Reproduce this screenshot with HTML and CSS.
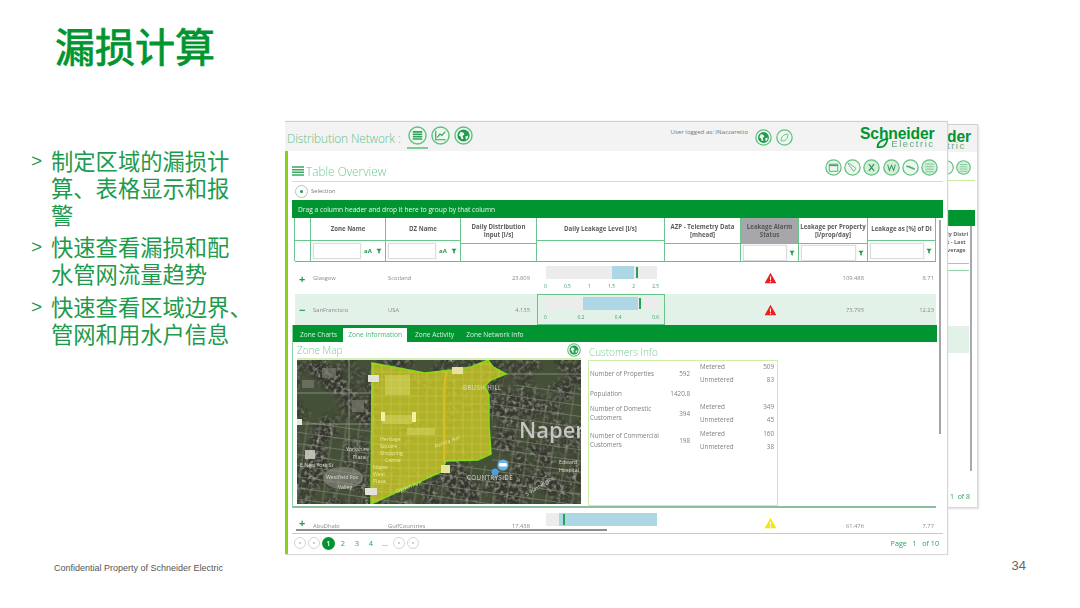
FILE: index.html
```html
<!DOCTYPE html>
<html lang="zh-CN">
<head>
<meta charset="utf-8">
<title>漏损计算</title>
<link rel="stylesheet" href="styles.css">
</head>
<body>
<svg class="defs" width="0" height="0" aria-hidden="true">
  <defs>
    <symbol id="i-ring" viewBox="0 0 20 20"><circle cx="10" cy="10" r="9" fill="#eef8f0" stroke="#62c07f" stroke-width="1.5"/></symbol>
    <symbol id="i-list" viewBox="0 0 20 20"><use href="#i-ring"/><path d="M5 6.2h10M5 8.7h10M5 11.2h10M5 13.7h10" stroke="#2ea65a" stroke-width="1.7"/></symbol>
    <symbol id="i-chart" viewBox="0 0 20 20"><use href="#i-ring"/><path d="M5 5v9.5h10.5" fill="none" stroke="#2ea65a" stroke-width="1.2"/><path d="M6.5 12l3-3.5 2 1.5 3.5-4" fill="none" stroke="#2ea65a" stroke-width="1.2"/></symbol>
    <symbol id="i-globe" viewBox="0 0 20 20"><use href="#i-ring"/><circle cx="10" cy="10" r="6.4" fill="#1f9c4d"/><path d="M7 6l3 1 1 2-2 1.500 1 3-2 .5-1-3-2-1zM12 11l3-1-.5 3-2 1.500z" fill="#eef8f0"/></symbol>
    <symbol id="i-leaf" viewBox="0 0 20 20"><use href="#i-ring"/><path d="M6 14c0-5 3-8 8-8 0 5-2 8-6 8z" fill="none" stroke="#62c07f" stroke-width="1.100"/></symbol>
    <symbol id="i-win" viewBox="0 0 20 20"><use href="#i-ring"/><path d="M5 6h10v8.500H5z" fill="none" stroke="#3aa863" stroke-width="1"/><path d="M5 7.500h10" stroke="#3aa863" stroke-width="1.800"/></symbol>
    <symbol id="i-tag" viewBox="0 0 20 20"><use href="#i-ring"/><path d="M5 5l2.500 1 6.500 5-2.500 3.500L6.500 8z" fill="none" stroke="#4bb36f" stroke-width="1"/></symbol>
    <symbol id="i-x" viewBox="0 0 20 20"><circle cx="10" cy="10" r="9" fill="#d7eedd" stroke="#62c07f" stroke-width="1.500"/><path d="M7 6l6 8M13 6l-6 8" stroke="#3b9a5b" stroke-width="1.600"/></symbol>
    <symbol id="i-w" viewBox="0 0 20 20"><circle cx="10" cy="10" r="9" fill="#d7eedd" stroke="#62c07f" stroke-width="1.500"/><path d="M5.500 6.500l2 7 2.500-6 2.500 6 2-7" fill="none" stroke="#3b9a5b" stroke-width="1.200"/></symbol>
    <symbol id="i-link" viewBox="0 0 20 20"><use href="#i-ring"/><path d="M5 8.500l3 .5 7 3" fill="none" stroke="#4bb36f" stroke-width="2"/></symbol>
    <symbol id="i-rows" viewBox="0 0 20 20"><circle cx="10" cy="10" r="9" fill="#d7eedd" stroke="#62c07f" stroke-width="1.500"/><path d="M5 6h10M5 9h10M5 12h10M5 15h10" stroke="#62c07f" stroke-width=".9"/></symbol>
    <symbol id="i-warn" viewBox="0 0 20 18"><path d="M10 1l9 16H1z"/><path d="M9 6.500h2l-.4 6h-1.200zM9 13.500h2v2H9z" fill="#fff"/></symbol>
    <symbol id="i-funnel" viewBox="0 0 8 8"><path d="M.5 1h7L5 4v3.500L3 6.500V4z" fill="#1f9c4d"/></symbol>
    <filter id="aerial" x="0" y="0" width="100%" height="100%">
      <feTurbulence type="fractalNoise" baseFrequency=".25" numOctaves="3" seed="7"/>
      <feColorMatrix values="0 0 0 0 .55  0 0 0 0 .55  0 0 0 0 .48  1.800 0 0 0 -.8"/>
    </filter>
    <filter id="soft" x="0" y="0" width="100%" height="100%">
      <feTurbulence type="fractalNoise" baseFrequency=".035" numOctaves="2" seed="3"/>
      <feColorMatrix values="0 0 0 0 .06  0 0 0 0 .08  0 0 0 0 .04  3.500 0 0 0 -1.300"/>
    </filter>
    <pattern id="streets" width="13" height="11" patternUnits="userSpaceOnUse" patternTransform="rotate(8)">
      <path d="M0 5.500h13M6 0v11" stroke="#a9a99c" stroke-width=".7" opacity=".6"/>
    </pattern>
    <pattern id="streets2" width="9" height="8" patternUnits="userSpaceOnUse">
      <path d="M0 4h9M4 0v8" stroke="#e9e98a" stroke-width=".6" opacity=".4"/>
    </pattern>
  </defs>
</svg>

<main class="slide">
  <h1 class="title">漏损计算</h1>

  <div class="content">
    <ul class="points">
      <li><span class="arrow">&gt;</span><span>制定区域的漏损计<br>算、表格显示和报<br>警</span></li>
      <li><span class="arrow">&gt;</span><span>快速查看漏损和配<br>水管网流量趋势</span></li>
      <li><span class="arrow">&gt;</span><span>快速查看区域边界、<br>管网和用水户信息</span></li>
    </ul>

    <div class="shot">
      <div class="back">
        <div class="back-head">
          <span class="back-logo">der</span>
          <span class="back-logo-sub">tric</span>
        </div>
        <div class="back-icons"><svg class="ico-14"><use href="#i-ring"/></svg><svg class="ico-14"><use href="#i-rows"/></svg></div>
        <div class="back-rule"></div>
        <div class="back-band"></div>
        <div class="back-body">
          <div class="back-col">
            <p class="back-text">ly Distri<br>t - Last<br>verage</p>
            <div class="back-line"></div>
            <div class="back-line"></div>
            <div class="back-pale"></div>
          </div>
          <div class="back-scroll"></div>
        </div>
        <div class="back-foot">1&nbsp;&nbsp;of 8</div>
      </div>

      <div class="app">
        <header class="app-head">
          <span class="app-name">Distribution Network :</span>
          <span class="nav-ico current"><svg class="ico-18"><use href="#i-list"/></svg></span>
          <svg class="ico-18"><use href="#i-chart"/></svg>
          <svg class="ico-18"><use href="#i-globe"/></svg>
          <span class="user">User logged as: INazzaretto</span>
          <svg class="ico-16"><use href="#i-globe"/></svg>
          <svg class="ico-16"><use href="#i-leaf"/></svg>
          <div class="logo">
            <span class="logo-main">Schneider</span>
            <span class="logo-sub"><svg class="logo-leaf" viewBox="0 0 14 12"><path d="M1 11c0-5 4-9 12-10-1 6-4 10-9 10z" fill="none" stroke="#009530" stroke-width="2"/></svg>Electric</span>
          </div>
        </header>

        <div class="app-body">
          <div class="overview">
            <svg class="ov-ico" viewBox="0 0 12 10"><path d="M0 1h12M0 3.700h12M0 6.300h12M0 9h12" stroke="#3aa863" stroke-width="1.500"/></svg>
            <span class="ov-title">Table Overview</span>
            <div class="tools">
              <svg class="ico-17"><use href="#i-win"/></svg>
              <svg class="ico-17"><use href="#i-tag"/></svg>
              <svg class="ico-17"><use href="#i-x"/></svg>
              <svg class="ico-17"><use href="#i-w"/></svg>
              <svg class="ico-17"><use href="#i-link"/></svg>
              <svg class="ico-17"><use href="#i-rows"/></svg>
            </div>
          </div>

          <div class="selection"><span class="sel-btn"></span><span>Selection</span></div>
          <div class="group-band">Drag a column header and drop it here to group by that column</div>

          <div class="tablewrap">
            <div class="tablecol">
              <div class="row thead">
                <div class="th short"><span class="th-label"></span><span class="th-filter"></span></div>
                <div class="th short"><span class="th-label">Zone Name</span><span class="th-filter"><span class="input"></span><span class="aa">aA</span><svg class="funnel"><use href="#i-funnel"/></svg></span></div>
                <div class="th short"><span class="th-label">DZ Name</span><span class="th-filter"><span class="input"></span><span class="aa">aA</span><svg class="funnel"><use href="#i-funnel"/></svg></span></div>
                <div class="th"><span class="th-label">Daily Distribution<br>Input [l/s]</span><span class="th-filter"></span></div>
                <div class="th short"><span class="th-label">Daily Leakage Level [l/s]</span><span class="th-filter"></span></div>
                <div class="th"><span class="th-label">AZP - Telemetry Data<br>[mhead]</span><span class="th-filter"></span></div>
                <div class="th sorted"><span class="th-label">Leakage Alarm<br>Status</span><span class="th-filter"><span class="input"></span><svg class="funnel"><use href="#i-funnel"/></svg></span></div>
                <div class="th"><span class="th-label">Leakage per Property<br>[l/prop/day]</span><span class="th-filter"><span class="input"></span><svg class="funnel"><use href="#i-funnel"/></svg></span></div>
                <div class="th short"><span class="th-label">Leakage as [%] of DI</span><span class="th-filter"><span class="input"></span><svg class="funnel"><use href="#i-funnel"/></svg></span></div>
              </div>

              <div class="row tr">
                <span class="td toggle">+</span><span class="td">Glasgow</span><span class="td">Scotland</span><span class="td num">23.809</span>
                <div class="td chart">
                  <div class="bar"><span class="fill" style="left:59.500%;width:19.800%"></span><span class="mark" style="left:81.500%"></span></div>
                  <div class="axis"><span>0</span><span>0.5</span><span>1</span><span>1.5</span><span>2</span><span>2.5</span></div>
                </div>
                <span class="td"></span>
                <span class="td center"><svg class="warn red"><use href="#i-warn"/></svg></span><span class="td num">109.488</span><span class="td num">8.71</span>
              </div>

              <div class="row tr selected">
                <span class="td toggle">−</span><span class="td">SanFrancisco</span><span class="td">USA</span><span class="td num">4.135</span>
                <div class="td chart boxed">
                  <div class="bar"><span class="fill" style="left:33.300%;width:49.500%"></span><span class="mark" style="left:83.500%"></span></div>
                  <div class="axis"><span>0</span><span>0.2</span><span>0.4</span><span>0.6</span></div>
                </div>
                <span class="td"></span>
                <span class="td center"><svg class="warn red"><use href="#i-warn"/></svg></span><span class="td num">73.795</span><span class="td num">12.23</span>
              </div>

              <section class="detail">
                <nav class="tabs">
                  <span class="tab">Zone Charts</span>
                  <span class="tab active">Zone Information</span>
                  <span class="tab">Zone Activity</span>
                  <span class="tab">Zone Network Info</span>
                </nav>
                <div class="panels">
                  <div class="map-panel">
                    <div class="panel-head"><span class="panel-title">Zone Map</span><svg class="ico-13"><use href="#i-globe"/></svg></div>
                    <div class="map-frame">
                      <svg class="map" viewBox="0 0 284 144" width="284" height="144" role="img" aria-label="Zone map">
                        <rect width="284" height="144" fill="#34362d"/>
                        <rect width="284" height="144" filter="url(#aerial)"/>
                        <rect width="284" height="144" filter="url(#soft)"/>
                        <rect x="195" y="25" width="89" height="119" fill="url(#streets)"/>
                        <rect y="60" width="75" height="84" fill="url(#streets)"/>
                        <rect x="76" y="105" width="120" height="39" fill="url(#streets)"/>
                        <ellipse cx="46" cy="118" rx="20" ry="11" fill="#8d8f86" opacity=".6"/>
                        <path d="M0 64h75M0 33h75M52 0v100M209 14h75" stroke="#b9b9ac" stroke-width=".8" opacity=".7"/>
                        <path d="M5 20h12v8H5zM25 8h14v10H25zM55 40h12v12H55z" fill="#77796d" opacity=".7"/>
                        <rect x="8" y="90" width="10" height="9" fill="#d7d7cf" opacity=".8"/>
                        <rect y="59" width="5" height="6" fill="#e8e8e0"/>
                        <path d="M75 3l53 10 26-3 20-3L191 0l5 7 13 7-15 6-6 6 4 9v30l2 29-13 6-32 1-5 11-70 32z" fill="#bfbf26" fill-opacity=".88" stroke="#7fdc12" stroke-width="1.500"/>
                        <path d="M75 3l53 10 26-3 20-3L191 0l5 7 13 7-15 6-6 6 4 9v30l2 29-13 6-32 1-5 11-70 32z" fill="url(#streets2)"/>
                        <path d="M150 12c-3 10-3 20-3 40v50" fill="none" stroke="#dcbc1e" stroke-width="2"/>
                        <path d="M88 15h25v20H88zM85 55h30v9H85zM110 68h28v7h-28z" fill="#dddd6e" opacity=".45"/>
                        <path d="M84 52h4v9h-4zM115 52h4v10h-4z" fill="#f2f2a0"/>
                        <rect x="155" y="7" width="11" height="7" fill="#e8e2a0"/>
                        <rect x="71" y="15" width="11" height="7" fill="#e2e2d8"/>
                        <rect x="144" y="105" width="9" height="8" fill="#e8e2a0"/>
                        <rect x="68" y="128" width="12" height="7" fill="#e2e2d8"/>
                        <text x="222" y="78" class="m-big">Naper</text>
                        <text x="166" y="30" class="m-s">BRUSH HILL</text>
                        <text x="170" y="120" class="m-s">COUNTRYSIDE</text>
                        <text x="49" y="91" class="m-t">Yorkshire</text>
                        <text x="56" y="99" class="m-t">Plaza</text>
                        <text x="3" y="107" class="m-t">E New York St</text>
                        <text x="29" y="119" class="m-t">Westfield Fox</text>
                        <text x="41" y="129" class="m-t">Valley</text>
                        <text x="83" y="81" class="m-y">Heritage</text>
                        <text x="83" y="88" class="m-y">Square</text>
                        <text x="83" y="95" class="m-y">Shopping</text>
                        <text x="88" y="102" class="m-y">Center</text>
                        <text x="76" y="109" class="m-y">Naper</text>
                        <text x="76" y="116" class="m-y">West</text>
                        <text x="76" y="123" class="m-y">Plaza</text>
                        <text x="100" y="133" class="m-y" transform="rotate(-20 100 133)">Ogden Ave</text>
                        <text x="138" y="88" class="m-y" transform="rotate(-20 138 88)">Aurora Ave</text>
                        <text x="230" y="136" class="m-t" transform="rotate(-32 230 136)">S Washington</text>
                        <text x="262" y="104" class="m-t">Edward</text>
                        <text x="262" y="112" class="m-t">Hospital</text>
                        <circle cx="206" cy="105" r="5.500" fill="#6cb2e8"/>
                        <rect x="202" y="103" width="8" height="3.500" rx="1.500" fill="#fff"/>
                        <circle cx="198" cy="112" r="3.500" fill="#4b9ee0"/>
                      </svg>
                    </div>
                  </div>

                  <div class="cust-panel">
                    <div class="panel-head"><span class="panel-title">Customers Info</span></div>
                    <div class="cust-box">
                      <div class="cust-group g-two">
                        <span class="c-name">Number of Properties</span><span class="c-val">592</span>
                        <div class="c-sub"><span>Metered</span><span>509</span><span>Unmetered</span><span>83</span></div>
                      </div>
                      <div class="cust-group g-one">
                        <span class="c-name">Population</span><span class="c-val">1420.8</span>
                      </div>
                      <div class="cust-group g-two">
                        <span class="c-name">Number of Domestic<br>Customers</span><span class="c-val">394</span>
                        <div class="c-sub"><span>Metered</span><span>349</span><span>Unmetered</span><span>45</span></div>
                      </div>
                      <div class="cust-group g-two">
                        <span class="c-name">Number of Commercial<br>Customers</span><span class="c-val">198</span>
                        <div class="c-sub"><span>Metered</span><span>160</span><span>Unmetered</span><span>38</span></div>
                      </div>
                    </div>
                  </div>
                </div>
              </section>

              <div class="row tr clipped">
                <span class="td toggle">+</span><span class="td">AbuDhabi</span><span class="td">GulfCountries</span><span class="td num">17.438</span>
                <div class="td chart">
                  <div class="bar"><span class="fill" style="left:11.500%;width:88.500%"></span><span class="mark" style="left:15%"></span></div>
                </div>
                <span class="td"></span>
                <span class="td center"><svg class="warn yellow"><use href="#i-warn"/></svg></span><span class="td num">61.476</span><span class="td num">7.77</span>
              </div>
              <div class="hscroll"><span class="hthumb"></span></div>
            </div>
            <div class="vscroll"><span class="vthumb"></span></div>
          </div>

          <footer class="pager">
            <span class="pg-ctl"></span><span class="pg-ctl"></span>
            <span class="pg-cur">1</span><span class="pg-num">2</span><span class="pg-num">3</span><span class="pg-num">4</span><span class="pg-num">...</span>
            <span class="pg-ctl"></span><span class="pg-ctl"></span>
            <span class="pg-info">Page&nbsp;&nbsp;&nbsp;1&nbsp;&nbsp;&nbsp;of 10</span>
          </footer>
        </div>
      </div>
    </div>
  </div>

  <footer class="slide-foot">
    <span class="confidential">Confidential Property of Schneider Electric</span>
    <span class="page-no">34</span>
  </footer>
</main>
</body>
</html>
```

FILE: styles.css
```css
* { box-sizing: border-box; }
html, body { margin: 0; padding: 0; background: #fff; }
.defs { position: absolute; }

.slide {
  width: 1080px;
  height: 608px;
  display: flex;
  flex-direction: column;
  overflow: hidden;
  background: #fff;
  font-family: "Noto Sans CJK SC", "Liberation Sans", sans-serif;
}

.title {
  height: 121px;
  margin: 0;
  padding: 16px 0 0 55px;
  color: #009530;
  font-size: 40px;
  line-height: 58px;
  font-weight: 400;
  -webkit-text-stroke: .8px #009530;
}

.content { display: flex; height: 434px; }

.points {
  width: 285px;
  margin: 0;
  padding: 25.500px 0 0 31px;
  list-style: none;
  color: #1d9a4c;
  font-size: 22.300px;
  line-height: 27.200px;
  white-space: nowrap;
}
.points li { display: flex; margin-bottom: 5px; }
.arrow { width: 20px; font-family: "Liberation Sans", sans-serif; font-size: 19px; }

/* screenshot */
.shot {
  position: relative;
  width: 693px;
  filter: blur(.45px);
  font-family: "Open Sans", "Liberation Sans", sans-serif;
}

.back {
  position: absolute;
  top: 3px;
  right: 0;
  width: 78px;
  height: 384px;
  padding-left: 47px;
  background: #fff;
  border-top: 1px solid #cfcfcf;
  border-right: 1px solid #d8d8d8;
  border-bottom: 1px solid #d8d8d8;
  box-shadow: 1px 1px 2px #ddd;
  overflow: hidden;
}
.back-head {
  height: 27px;
  margin-left: -47px;
  padding-left: 47px;
  background: #f3f3f3;
  color: #009530;
  line-height: 1;
  position: relative;
}
.back-logo { display: block; padding-top: 3px; font: 700 15.600px "Liberation Sans", sans-serif; letter-spacing: -.15px; }
.back-logo-sub { display: block; margin-top: -6px; font: 400 9.500px "Liberation Sans", sans-serif; letter-spacing: 1.500px; color: #63a77e; }
.back-icons { display: flex; justify-content: flex-end; height: 28px; padding: 8px 6px 0 0; gap: 2px; flex-wrap: nowrap; }
.back-rule { height: 1px; margin-right: 2px; background: #c8ec9f; }
.back-band { height: 16px; margin-top: 29px; margin-right: 2px; background: #009530; }
.back-body { display: flex; height: 245px; }
.back-col { width: 22px; overflow: hidden; }
.back-text { margin: 4px 0 0; height: 27px; font-size: 5.500px; line-height: 8px; font-weight: 700; color: #666; white-space: nowrap; }
.back-line { height: 1px; margin-top: 6px; background: #8fd2a5; }
.back-pale { height: 27px; margin-top: 55px; background: #e3f2e8; }
.back-scroll { width: 2px; height: 100%; margin-left: 1px; background: #a8a8ad; }
.back-foot { padding: 21px 0 0 3px; color: #2aa55a; font-size: 7px; white-space: nowrap; }

.app {
  position: relative;
  display: flex;
  flex-direction: column;
  width: 662px;
  height: 434px;
  background: #fff;
  border-top: 1px solid #cfcfcf;
  border-bottom: 1px solid #dcdcdc;
  box-shadow: 1px 0 1px #d5d5d5;
}
.app-head {
  display: flex;
  align-items: center;
  gap: 4px;
  height: 29px;
  flex: none;
  padding-left: 2px;
  background: #f3f3f3;
}
.app-name { width: 116.500px; color: #66c08a; font-size: 11.800px; letter-spacing: -.1px; font-weight: 300; white-space: nowrap; padding-top: 2px; }
.nav-ico { position: relative; display: flex; margin-top: -3px; }
.nav-ico.current::after { content: ""; position: absolute; left: -1px; right: -1px; bottom: -4px; height: 2px; background: #7fcb97; }
.ico-18 { width: 19px; height: 19px; flex: none; margin-top: -3px; }
.nav-ico .ico-18 { margin: 0; }
.ico-17 { width: 17px; height: 17px; flex: none; }
.ico-16 { width: 17px; height: 17px; flex: none; margin-top: 2px; }
.ico-16 + .ico-16 { margin-left: 0; }
.ico-14 { width: 15px; height: 15px; flex: none; }
.ico-13 { width: 14px; height: 14px; }
.user { width: 80px; margin: -10px 0 0 194px; font-size: 6.100px; color: #777; white-space: nowrap; }
.logo { display: flex; flex-direction: column; margin-left: 60px; width: 78px; line-height: 1; align-items: flex-end; }
.logo-main { font: 700 15.700px "Liberation Sans", sans-serif; letter-spacing: -.15px; color: #009530; white-space: nowrap; }
.logo-sub { display: flex; align-items: center; gap: 2px; margin-top: -5px; font: 400 9.500px "Liberation Sans", sans-serif; letter-spacing: 1.500px; color: #63a77e; }
.logo-leaf { width: 13px; height: 10px; }

.app-body {
  flex: 1;
  display: flex;
  flex-direction: column;
  min-height: 0;
  width: 658px;
  padding-left: 4px;
  border-left: 3px solid #86d216;
}

.overview {
  display: flex;
  align-items: flex-end;
  width: 651px;
  height: 31px;
  flex: none;
  border-bottom: 1px solid #c8ec9f;
  padding-bottom: 2px;
}
.ov-ico { width: 12px; height: 10px; flex: none; margin-bottom: 3px; }
.ov-title { margin-left: 2px; color: #70c795; font-size: 11.800px; line-height: 16px; font-weight: 300; }
.tools { display: flex; gap: 2.200px; margin-left: auto; margin-right: 5px; margin-bottom: 3px; }

.selection { display: flex; align-items: center; gap: 3px; height: 18px; flex: none; padding-left: 3px; font-size: 5.800px; color: #777; }
.sel-btn { position: relative; width: 13px; height: 13px; border: 1px solid #bbb; border-radius: 50%; }
.sel-btn::after { content: ""; position: absolute; left: 4px; top: 4px; width: 3px; height: 3px; border-radius: 50%; background: #1f9c4d; }

.group-band {
  display: flex;
  align-items: center;
  width: 651px;
  height: 18px;
  flex: none;
  padding-left: 6px;
  background: #009530;
  color: #e8f5ec;
  font-size: 6.650px;
  white-space: nowrap;
}

.tablewrap { display: flex; flex: none; width: 651px; height: 315px; overflow: hidden; }
.tablecol { position: relative; width: 644px; padding-left: 3px; }
.vscroll { width: 7px; padding: 2px 2px 0 3px; }
.vthumb { display: block; width: 2px; height: 214px; background: #a4a4a8; }

.row {
  display: grid;
  grid-template-columns: 16px 75px 75px 76px 128px 76px 58px 69px 68px;
}

.thead { height: 44px; border-bottom: 1px solid #5fc084; }
.th { display: flex; flex-direction: column; border-right: 1px solid #6cc58c; }
.th:first-child { border-left: 1px solid #6cc58c; margin-left: -1px; }
.th-label {
  display: flex;
  align-items: center;
  justify-content: center;
  height: 26px;
  flex: none;
  border-bottom: 1px solid #6cc58c;
  text-align: center;
  font-size: 6.100px;
  line-height: 8px;
  font-weight: 700;
  color: #5c5c5c;
  white-space: nowrap;
  overflow: hidden;
}
.th.short .th-label { height: 23px; }
.th.sorted .th-label { background: #a7a7ab; color: #555; }
.th-filter { flex: 1; display: flex; align-items: center; gap: 1px; padding: 0 2px; }
.input { flex: 1; height: 16px; border: 1px solid #ddd; background: #fff; box-shadow: 0 0 1px #ccc; }
.aa { font-size: 6px; font-weight: 700; color: #1f9c4d; width: 12px; text-align: center; }
.funnel { width: 6px; height: 6px; flex: none; margin: 0 1px; }

.tr { align-items: center; font-size: 5.800px; color: #8a8a8a; }
.tr:not(.selected):not(.clipped) { height: 32px; }
.selected { height: 31px; background: #e3f2e8; }
.td { padding-left: 2px; white-space: nowrap; }
.toggle { font-size: 11px; font-weight: 700; color: #1f9c4d; line-height: 1; padding-left: 4px; }
.num { padding: 0 7px 0 0; text-align: right; }
.num:nth-last-child(2) { padding-right: 4px; }
.num:last-child { padding-right: 2px; }
.center { display: flex; justify-content: center; padding: 0; }
.warn { width: 13px; height: 12px; }
.red { fill: #ee1c1c; }
.yellow { fill: #f5e60a; }
.chart { align-self: stretch; padding: 4px 8px 0 9px; }
.boxed { border: 1px solid #69c389; padding: 2px 7px 0 8px; }
.bar { position: relative; height: 13px; background: #ececec; }
.fill { position: absolute; top: 0; bottom: 0; background: #aed7e6; }
.mark { position: absolute; top: 1px; bottom: 1px; width: 2px; background: #23a258; }
.axis { display: flex; justify-content: space-between; margin: 4px -2px 0; font-size: 4.800px; color: #3f9d63; }

.detail { height: 183px; border-left: 1px solid #8ad3a3; margin-left: -3px; border-bottom: 2px solid #8cbf9f; }
.tabs { display: flex; align-items: flex-end; height: 17px; width: 644px; padding-left: 7px; gap: 9px; background: #009530; }
.tab { color: #d8efdf; font-size: 6.600px; white-space: nowrap; height: 14px; line-height: 13px; }
.tab.active { background: #fff; color: #46b673; padding: 0 5px; margin: 0 -1px 0 -3px; }
.tab:last-child { margin-left: 3px; }

.panels { display: flex; height: 164px; }
.map-panel { width: 295px; padding-left: 4px; padding-right: 7px; }
.panel-head { display: flex; align-items: center; justify-content: space-between; height: 16px; }
.panel-title { color: #78cb9c; font-size: 10px; font-weight: 300; white-space: nowrap; }
.map-frame { border-top: 2px solid #d3efb4; width: 284px; }
.map { display: block; }
.map text { font-family: "Open Sans", "Liberation Sans", sans-serif; }
.m-big { font-size: 22px; fill: #c5c5c2; font-weight: 600; }
.m-s { font-size: 6.200px; fill: #dcdcd0; letter-spacing: .4px; }
.m-t { font-size: 5.200px; fill: #dadad2; }
.m-y { font-size: 5.200px; fill: #eaea9a; }

.cust-panel { width: 190px; }
.cust-panel .panel-head { padding-top: 3px; }
.cust-panel .panel-title { padding-left: 1px; }
.cust-box {
  height: 146px;
  margin-top: 2px;
  padding: 0 3px 0 1px;
  border: 1px solid #cdeea9;
  font-size: 6.300px;
  color: #808080;
}
.cust-group { display: grid; grid-template-columns: 80px 20px 1fr; align-items: center; line-height: 9px; }
.g-two { height: 24px; }
.g-one { height: 16px; }
.g-two:last-child { margin-top: 3px; }
.c-val { text-align: right; }
.c-name { white-space: nowrap; }
.c-sub { display: grid; grid-template-columns: 1fr auto; row-gap: 4.500px; padding-left: 10px; line-height: 9px; }
.c-sub span:nth-child(even) { text-align: right; }

.clipped { height: 21px; overflow: hidden; }
.clipped .td { align-self: start; padding-top: 14px; }
.clipped .chart { padding-top: 5px; }
.clipped .toggle { padding-top: 9px; }
.clipped .center { padding-top: 9px; }
.hscroll { position: absolute; left: 1px; right: 0; bottom: 2px; height: 2px; }
.hthumb { display: block; width: 311px; height: 2px; margin-left: 3px; background: #8d8d90; }

.pager {
  display: flex;
  align-items: center;
  gap: 2px;
  flex: 1;
  width: 651px;
  padding-left: 2px;
  padding-bottom: 2px;
  border-top: 1px solid #c9c9c9;
  font-size: 7.500px;
  color: #2aa55a;
}
.pg-ctl { position: relative; width: 12px; height: 12px; border: 1px solid #d5d5d5; border-radius: 50%; }
.pg-ctl::after { content: ""; position: absolute; left: 4px; top: 4px; width: 2px; height: 2px; border-radius: 50%; background: #9ad5ae; }
.pg-cur { display: flex; align-items: center; justify-content: center; width: 13px; height: 13px; border-radius: 50%; background: #009530; color: #fff; font-weight: 600; }
.pg-num { width: 12px; text-align: center; }
.pg-info { margin-left: auto; margin-right: 4px; font-size: 7.200px; white-space: nowrap; }

.slide-foot {
  flex: 1;
  display: flex;
  justify-content: space-between;
  padding: 8px 54px 0 54px;
  font-family: "Liberation Sans", sans-serif;
}
.confidential { font-size: 9px; color: #555; line-height: 11px; }
.page-no { font-size: 13px; color: #666; line-height: 15px; margin-top: -5px; }
```
